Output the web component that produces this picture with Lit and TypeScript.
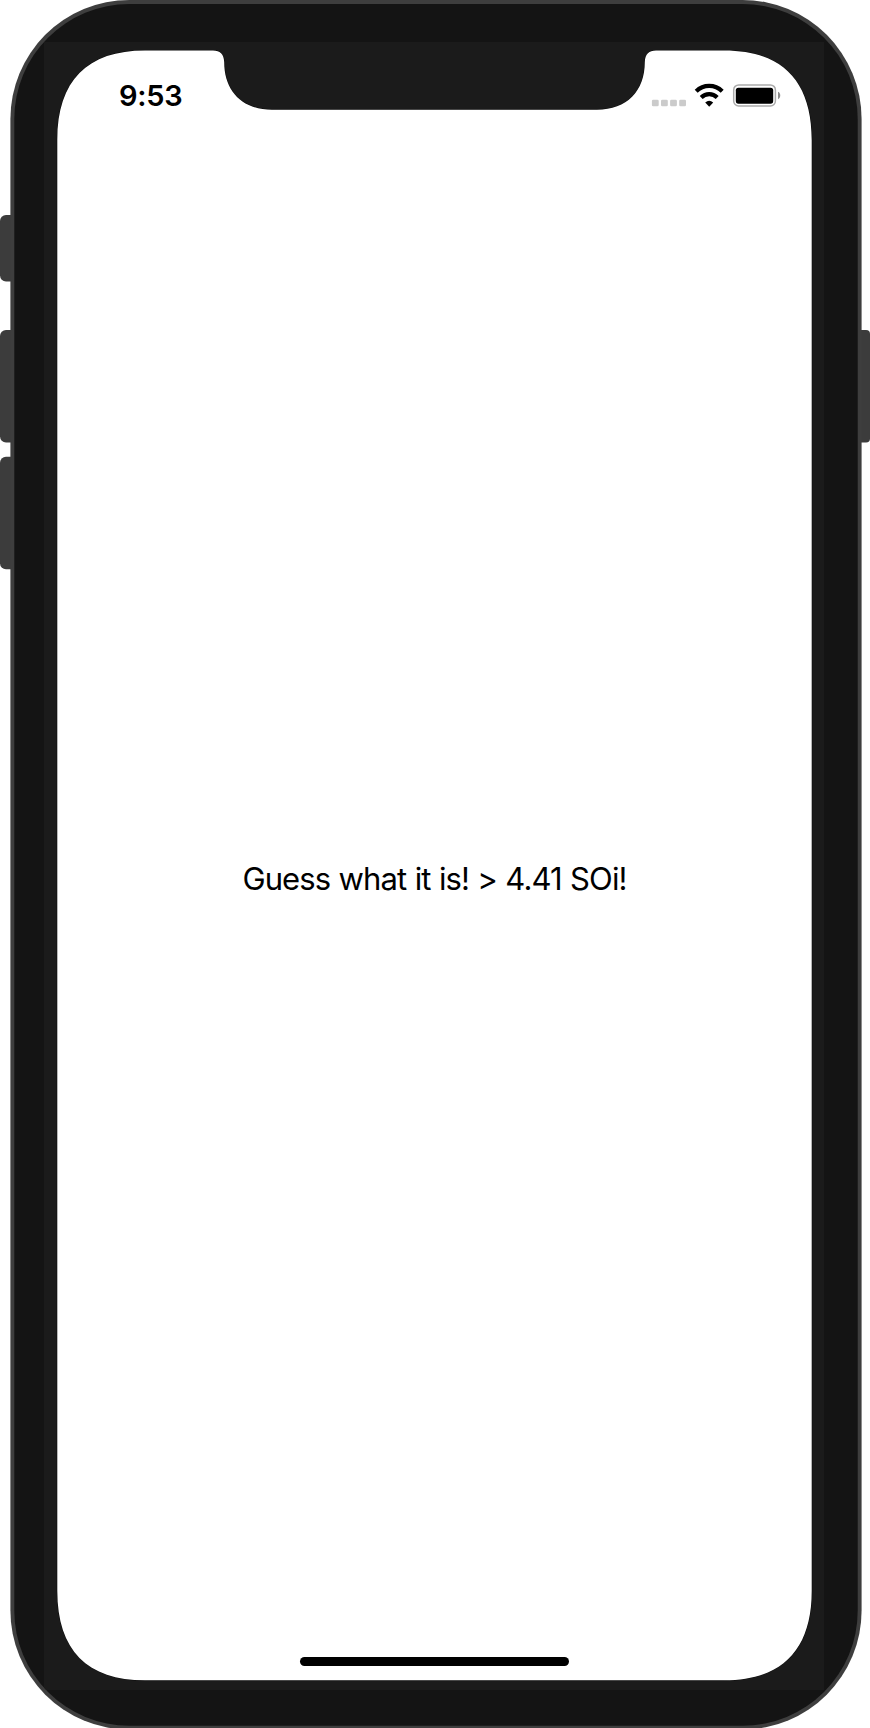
import { LitElement, html, svg, css } from "lit";
import { customElement, property } from "lit/decorators.js";

@customElement("device-shell")
class DeviceShell extends LitElement {
  static styles = css`
    :host { display: block; width: 870px; height: 1728px; }
    svg { display: block; }
  `;
  render() {
    return html`<svg width="870" height="1728" viewBox="0 0 870 1728">
      <defs>
        <clipPath id="body"><rect x="14.3" y="4" width="843.4" height="1721.7" rx="115" ry="115" /></clipPath>
      </defs>
      <g fill="#3c3c3c">
        <rect x="0" y="215" width="20" height="66.5" rx="6" />
        <rect x="0" y="330" width="20" height="112.5" rx="6" />
        <rect x="0" y="456.7" width="20" height="112.5" rx="6" />
        <rect x="850" y="330" width="20" height="112.5" rx="4" />
      </g>
      <rect x="10.4" y="0" width="851.2" height="1729.5" rx="119" ry="119" fill="#3e3e3e" />
      <g clip-path="url(#body)">
        <rect width="870" height="1728" fill="#141414" />
        <rect x="44" y="42" width="780" height="1648" fill="#1b1b1b" />
      </g>
      <path fill="#fff" stroke="#080808" stroke-width="1" paint-order="stroke"
        d="M57.3 140C57.3 80.5 87.3 50.5 145 50.5H213C220 50.5 223.8 54 224.2 62C224.2 91 242 109.7 272 109.7H597C627 109.7 644.8 91 644.8 62C645.2 54 649 50.5 656 50.5H724C781.7 50.5 811.7 80.5 811.7 140V1591C811.7 1650.3 781.7 1680.3 724 1680.3H145C87.3 1680.3 57.3 1650.3 57.3 1591Z" />
    </svg>`;
  }
}

@customElement("status-bar")
class StatusBar extends LitElement {
  @property() time = "9:53";
  static styles = css`
    :host { display: flex; justify-content: space-between; align-items: flex-start; }
    .time { font: 600 29px/36px Inter, sans-serif; letter-spacing: -0.3px; padding: 27px 0 0 61px; }
    .icons { display: block; margin: 29px 28px 0 0; }
  `;
  render() {
    return html`
      <div class="time">${this.time}</div>
      <svg class="icons" width="134" height="30" viewBox="650 80 134 30">
        <g fill="#cbcbcb">
          ${[651.9, 661, 670.1, 679.2].map((x) => svg`<rect x=${x} y="99.8" width="6.8" height="6.5" rx="1.3" />`)}
        </g>
        <g fill="none" stroke="#000" stroke-width="4.2">
          <path d="M696.2 91.2A18.6 18.6 0 0 1 722.2 91.2" />
          <path d="M701.2 97.4A11.6 11.6 0 0 1 717.2 97.4" />
        </g>
        <path d="M705.2 102.6Q709.2 98.8 713.2 102.6L709.2 106.8Z" />
        <rect x="733.7" y="84.9" width="41.7" height="21.1" rx="5" fill="none" stroke="#aaa" stroke-width="1.5" />
        <rect x="735.8" y="87.7" width="37.4" height="16" rx="2.6" />
        <path fill="#8c8c8c" d="M778 91.8C781 93 781 98 778 99.2Z" />
      </svg>`;
  }
}

@customElement("app-root")
class AppRoot extends LitElement {
  static styles = css`
    :host { display: grid; width: 870px; height: 1728px; overflow: hidden; background: #fff; color: #000; }
    device-shell, .screen { grid-area: 1 / 1; }
    .screen { display: flex; flex-direction: column; margin: 51px 58px 48px; min-height: 0; }
    status-bar { height: 59px; }
    .content { flex: 1; display: flex; align-items: center; justify-content: center; padding-bottom: 9px; }
    .message { font: 400 31px/40px Inter, sans-serif; letter-spacing: -0.88px; word-spacing: 0.5px; margin-right: 1px; white-space: nowrap; }
    .home { width: 269px; height: 9px; border-radius: 5px; background: #000; align-self: center; margin: 0 1px 14px 0; }
  `;
  render() {
    return html`
      <device-shell></device-shell>
      <main class="screen">
        <status-bar time="9:53"></status-bar>
        <div class="content"><div class="message">Guess what it is! &gt; 4.41 SOi!</div></div>
        <div class="home"></div>
      </main>`;
  }
}
